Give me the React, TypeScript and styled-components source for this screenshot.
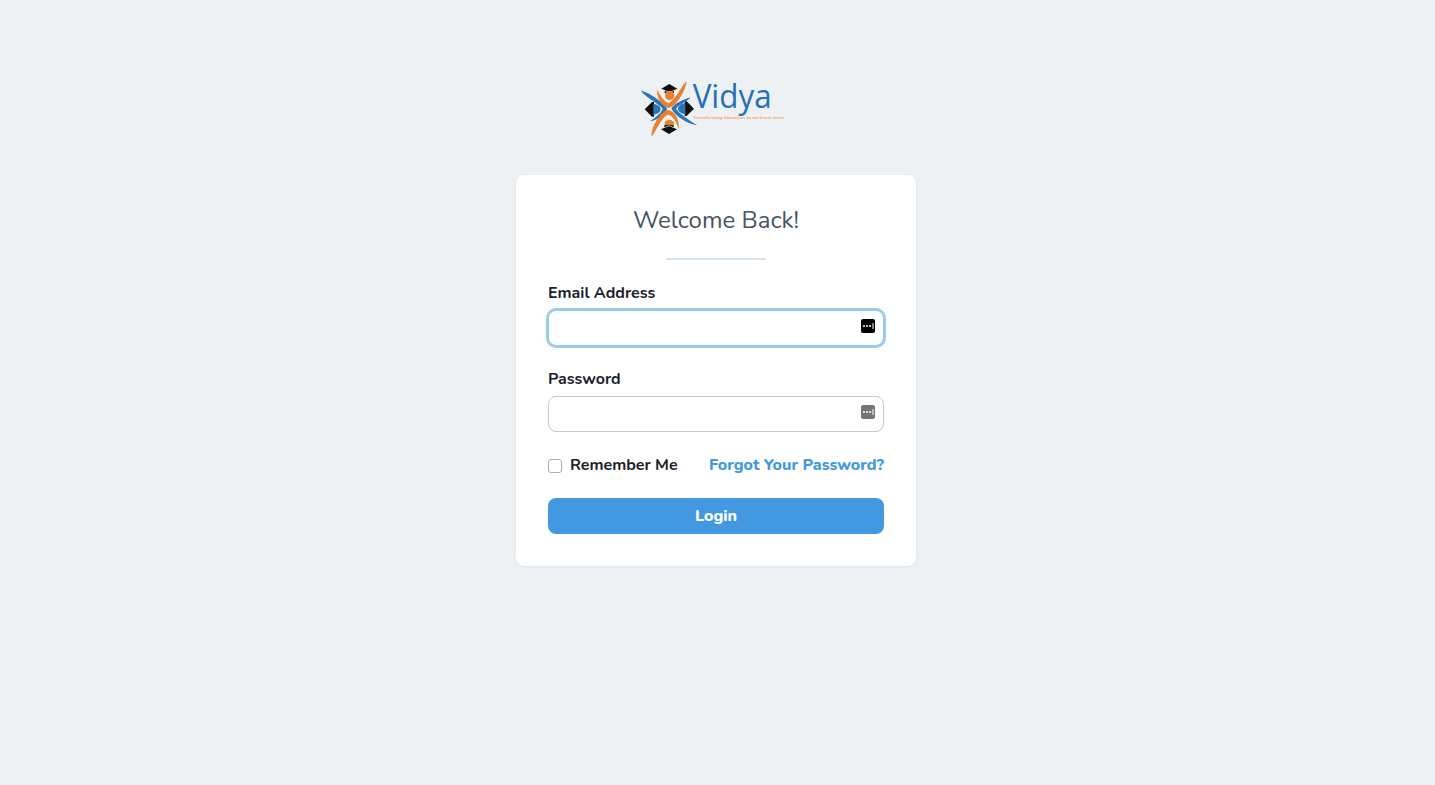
import styled, { createGlobalStyle } from "styled-components";

const GlobalStyle = createGlobalStyle`
  html, body {
    margin: 0;
    height: 100%;
    background: #eef1f4;
    font-family: "Nunito", "Lato", "Noto Sans", sans-serif;
  }
`;

const Page = styled.div`
  display: flex;
  flex-direction: column;
  align-items: center;
  height: 785px;
  box-sizing: border-box;
  padding: 70px 3px 0 0;
`;
const LogoBox = styled.div`
  height: 75px;
  margin: 0 7px 30px 0;
`;
const Card = styled.form`
  width: 400px;
  box-sizing: border-box;
  padding: 32px;
  background: #fff;
  border-radius: 8px;
  box-shadow: 0 1px 3px rgba(0, 0, 0, 0.06);
`;
const Title = styled.h2`
  margin: 0;
  font-size: 24px;
  line-height: 27px;
  font-weight: 400;
  text-align: center;
  color: #465363;
`;
const Divider = styled.hr`
  width: 100px;
  height: 2px;
  margin: 24px auto 24px;
  border: 0;
  background: #d5e3ef;
`;
const Field = styled.div`
  margin-bottom: 24px;
`;
const Label = styled.label`
  display: block;
  margin-bottom: 8px;
  font-size: 16px;
  line-height: 18px;
  font-weight: 700;
  color: #1a2029;
`;
const InputWrap = styled.div`
  position: relative;
`;
const Input = styled.input<{ $focused?: boolean }>`
  display: block;
  width: 100%;
  height: 36px;
  box-sizing: border-box;
  border: 1px solid ${(p) => (p.$focused ? "#90cdf4" : "#bccad8")};
  border-radius: 8px;
  background: #fff;
  outline: none;
  box-shadow: ${(p) => (p.$focused ? "0 0 0 2px #9ccbee" : "none")};
`;
const KeyBadge = styled.svg`
  position: absolute;
  top: 9px;
  right: 9px;
`;
const OptionsRow = styled.div`
  display: flex;
  align-items: center;
  justify-content: space-between;
  margin-bottom: 24px;
  height: 18px;
`;
const Remember = styled.label`
  display: flex;
  align-items: center;
  gap: 8px;
  font-size: 16px;
  font-weight: 700;
  color: #1a2029;
`;
const Check = styled.input`
  appearance: none;
  width: 14px;
  height: 14px;
  margin: 1px 0 0;
  box-sizing: border-box;
  border: 1px solid #b0b0b0;
  border-radius: 3px;
  background: #fff;
`;
const ForgotLink = styled.a`
  font-size: 16px;
  font-weight: 800;
  color: #4299e1;
  text-decoration: none;
`;
const LoginButton = styled.button`
  display: block;
  width: 100%;
  height: 36px;
  border: 0;
  border-radius: 8px;
  background: #4299e1;
  color: #fff;
  font-family: inherit;
  font-size: 16px;
  font-weight: 800;
`;

const Mortarboard = ({ x, y, flip }: { x: number; y: number; flip?: boolean }) => (
  <g transform={`translate(${x} ${y}) scale(1 ${flip ? -1 : 1})`} fill="#111">
    <path d="M-24 0 L0 -14 L24 0 L0 10 Z" />
    <path d="M-14 6 L0 12 L14 6 L14 12 L0 16 L-14 12 Z" />
  </g>
);

// coordinates are 3x screen pixels, origin at the logo box corner
const Logo = () => (
  <svg width="165" height="75" viewBox="0 0 495 225">
    <path d="M44 118 L66 96 L72 96 L72 140 L66 140 Z" fill="#111" />
    <path d="M192 116 L170 94 L164 94 L164 138 L170 138 Z" fill="#111" />
    <path d="M70 102 C 82 102 92 110 92 118 C 92 126 82 134 70 134 Z" fill="#2b74b8" />
    <path d="M166 100 C 154 100 144 108 144 116 C 144 124 154 132 166 132 Z" fill="#2b74b8" />
    <g fill="#2b74b8">
      <path d="M33 62 C 46 62 96 92 112 116 C 104 132 84 150 60 154 C 78 142 96 126 98 116 C 82 98 44 80 33 62 Z" />
      <path d="M182 82 C 164 86 130 102 124 116 C 136 138 172 162 202 166 C 180 152 146 130 138 116 C 146 104 170 96 182 82 Z" />
    </g>
    <Mortarboard x={118} y={56} />
    <Mortarboard x={117} y={178} flip />
    <g fill="#e9802c">
      <circle cx="119" cy="76" r="14" />
      <path d="M170 34 C 156 44 138 88 116 100 C 104 96 90 78 82 58 C 78 84 96 110 116 114 C 142 108 166 62 170 34 Z" />
      <path d="M65 200 C 78 184 94 140 114 134 C 130 136 140 158 146 178 C 150 154 136 122 114 120 C 90 124 62 174 65 200 Z" />
      <path d="M103 164 A 15 15 0 0 1 133 164 Z" />
    </g>
    <text x="188" y="113" fontFamily="'Open Sans', sans-serif" fontSize="100" fill="#2470b6" textLength="237" lengthAdjust="spacingAndGlyphs">
      Vidya
    </text>
    <text x="190" y="147" fontFamily="'Open Sans', sans-serif" fontSize="11" fontWeight="700" fill="#ecae7c" textLength="272" lengthAdjust="spacingAndGlyphs">
      Transforming Education as we know more
    </text>
  </svg>
);

const PasswordKey = ({ color }: { color: string }) => (
  <KeyBadge width="14" height="14" viewBox="0 0 14 14">
    <rect width="14" height="14" rx="2" fill={color} />
    <circle cx="3" cy="7" r="1" fill="#fff" />
    <circle cx="6" cy="7" r="1" fill="#fff" />
    <circle cx="9" cy="7" r="1" fill="#fff" />
    <rect x="11.5" y="4" width="1" height="6" fill="#fff" />
  </KeyBadge>
);

const App = () => (
  <Page>
    <GlobalStyle />
    <LogoBox>
      <Logo />
    </LogoBox>
    <Card onSubmit={(e) => e.preventDefault()}>
      <Title>Welcome Back!</Title>
      <Divider />
      <Field>
        <Label>Email Address</Label>
        <InputWrap>
          <Input type="email" $focused />
          <PasswordKey color="#000" />
        </InputWrap>
      </Field>
      <Field>
        <Label>Password</Label>
        <InputWrap>
          <Input type="password" />
          <PasswordKey color="#767676" />
        </InputWrap>
      </Field>
      <OptionsRow>
        <Remember>
          <Check type="checkbox" />
          Remember Me
        </Remember>
        <ForgotLink href="#">Forgot Your Password?</ForgotLink>
      </OptionsRow>
      <LoginButton type="submit">Login</LoginButton>
    </Card>
  </Page>
);

export default App;
